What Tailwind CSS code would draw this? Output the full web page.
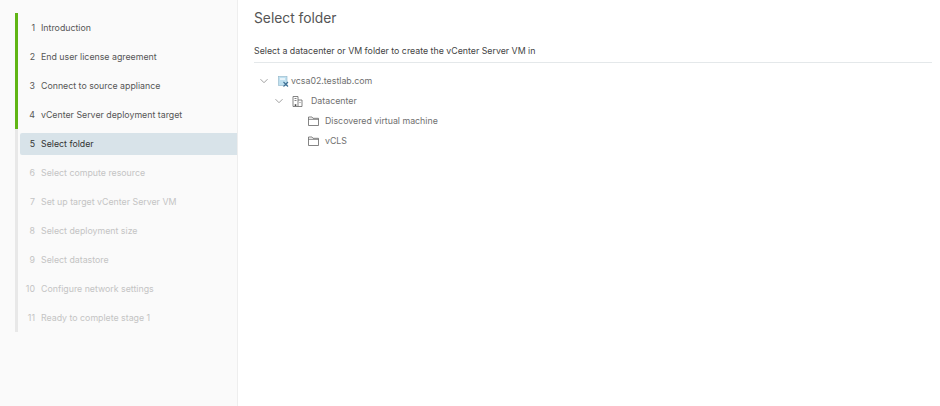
<!DOCTYPE html>
<html lang="en">
<head>
    <meta charset="UTF-8">
    <title>Select folder</title>
    <script src="https://cdn.jsdelivr.net/npm/@tailwindcss/browser@4"></script>
</head>
<body class="bg-white font-['Inter',sans-serif]">
    <div class="flex h-[406px] w-[940px] overflow-hidden">
        <!-- Steps -->
        <aside class="w-[238px] shrink-0 bg-[#fafafa] border-r border-[#eeeeee] pt-[13px] pl-[15px]">
            <ol class="border-l-[3px] border-[#e8e8e8] text-[8.8px]">
                <li class="flex h-[29px] items-center -ml-[3px] border-l-[3px] border-[#60b515] text-[#565656]"><span class="w-[23px] pr-[6px] text-right">1</span>Introduction</li>
                <li class="flex h-[29px] items-center -ml-[3px] border-l-[3px] border-[#60b515] text-[#565656]"><span class="w-[23px] pr-[6px] text-right">2</span>End user license agreement</li>
                <li class="flex h-[29px] items-center -ml-[3px] border-l-[3px] border-[#60b515] text-[#565656]"><span class="w-[23px] pr-[6px] text-right">3</span>Connect to source appliance</li>
                <li class="flex h-[29px] items-center -ml-[3px] border-l-[3px] border-[#60b515] text-[#565656]"><span class="w-[23px] pr-[6px] text-right">4</span>vCenter Server deployment target</li>
                <li class="flex h-[29px] items-center py-[3px]">
                    <div class="flex h-[22px] flex-1 items-center rounded-l-[2px] bg-[#d8e3e9] text-[#333333] ml-[2px]"><span class="w-[21px] pr-[6px] text-right">5</span>Select folder</div>
                </li>
                <li class="flex h-[29px] items-center text-[#c4c4c4]"><span class="w-[23px] pr-[6px] text-right">6</span>Select compute resource</li>
                <li class="flex h-[29px] items-center text-[#c4c4c4]"><span class="w-[23px] pr-[6px] text-right">7</span>Set up target vCenter Server VM</li>
                <li class="flex h-[29px] items-center text-[#c4c4c4]"><span class="w-[23px] pr-[6px] text-right">8</span>Select deployment size</li>
                <li class="flex h-[29px] items-center text-[#c4c4c4]"><span class="w-[23px] pr-[6px] text-right">9</span>Select datastore</li>
                <li class="flex h-[29px] items-center text-[#c4c4c4]"><span class="w-[23px] pr-[6px] text-right">10</span>Configure network settings</li>
                <li class="flex h-[29px] items-center text-[#c4c4c4]"><span class="w-[23px] pr-[6px] text-right">11</span>Ready to complete stage 1</li>
            </ol>
        </aside>

        <!-- Main content -->
        <main class="flex-1 pl-[16px] pr-[8px]">
            <h1 class="pt-[8px] text-[13.8px] leading-[20px] text-[#555555]">Select folder</h1>
            <p class="mt-[16px] border-b border-[#e4e8ea] pb-[5px] text-[8.8px] leading-[13px] text-[#444444]">Select a datacenter or VM folder to create the vCenter Server VM in</p>

            <ul class="mt-[8px] text-[8.8px] text-[#707070]">
                <li class="flex h-[20px] items-center">
                    <svg class="ml-[6px] mr-[10px] h-[8px] w-[8px]" viewBox="0 0 8 8" fill="none" stroke="#888888" stroke-width="0.8"><path d="M0.5 2.2 4 5.7 7.5 2.2"/></svg>
                    <svg class="mr-[2px] h-[11px] w-[11px]" viewBox="0 0 11 11"><rect x="0.5" y="0.5" width="8.5" height="9" fill="#bfe0f0" stroke="#8fb4c8" stroke-width="0.6"/><rect x="2" y="2" width="5" height="2" fill="#e8f4fa"/><path d="M5.5 6 10 10.5M10 6 5.5 10.5" stroke="#3d6f94" stroke-width="1.1"/></svg>
                    vcsa02.testlab.com
                </li>
                <li class="flex h-[20px] items-center">
                    <svg class="ml-[21px] mr-[9px] h-[8px] w-[8px]" viewBox="0 0 8 8" fill="none" stroke="#888888" stroke-width="0.8"><path d="M0.5 2.2 4 5.7 7.5 2.2"/></svg>
                    <svg class="mr-[8px] h-[11px] w-[11px]" viewBox="0 0 11 11" fill="none" stroke="#666666" stroke-width="0.8"><path d="M1 10.5V0.5H6V10.5H1ZM6 4H10V10.5H6M2.5 2.5H4.5M2.5 4.5H4.5M8 6V7"/><rect x="2.7" y="8.3" width="1.6" height="1.6" fill="#333333" stroke="none"/></svg>
                    Datacenter
                </li>
                <li class="flex h-[20px] items-center">
                    <svg class="ml-[54px] mr-[6px] h-[10px] w-[11px]" viewBox="0 0 11 10" fill="none" stroke="#666666" stroke-width="0.8"><path d="M0.5 9.5V1H4L5 2.3H10.5V9.5ZM0.5 3.3H10.5"/></svg>
                    Discovered virtual machine
                </li>
                <li class="flex h-[20px] items-center">
                    <svg class="ml-[54px] mr-[6px] h-[10px] w-[11px]" viewBox="0 0 11 10" fill="none" stroke="#666666" stroke-width="0.8"><path d="M0.5 9.5V1H4L5 2.3H10.5V9.5ZM0.5 3.3H10.5"/></svg>
                    vCLS
                </li>
            </ul>
        </main>
    </div>
</body>
</html>
